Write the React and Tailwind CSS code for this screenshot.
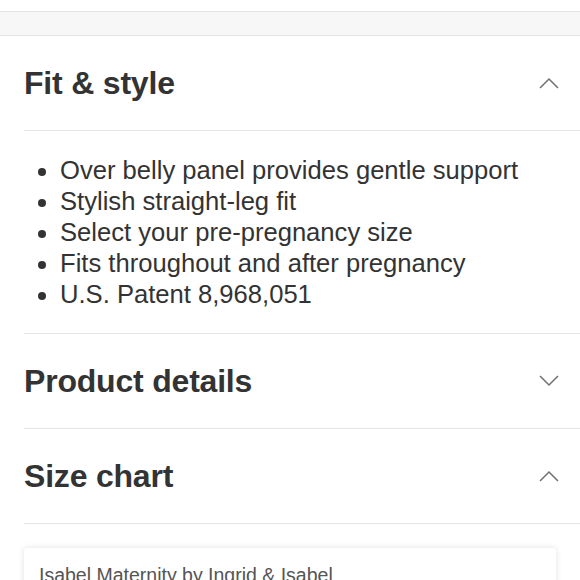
import { useState } from 'react';

const fitItems = [
  'Over belly panel provides gentle support',
  'Stylish straight-leg fit',
  'Select your pre-pregnancy size',
  'Fits throughout and after pregnancy',
  'U.S. Patent 8,968,051',
];

function Chevron({ open }) {
  return (
    <svg width="20" height="12" viewBox="0 0 20 12" fill="none" className="shrink-0">
      {open ? (
        <path d="M1 11 L10 2 L19 11" stroke="#707070" strokeWidth="1.5" />
      ) : (
        <path d="M1 1 L10 10 L19 1" stroke="#707070" strokeWidth="1.5" />
      )}
    </svg>
  );
}

function Section({ title, open, onToggle, children }) {
  return (
    <div className="ml-6 border-b border-[#e6e6e6]">
      <button
        onClick={onToggle}
        className="flex h-[94px] w-full items-center justify-between pr-[21px] text-left"
      >
        <h2 className="text-[32px] font-bold text-[#333333] tracking-[-0.2px]">{title}</h2>
        <Chevron open={open} />
      </button>
      {open && children}
    </div>
  );
}

export default function App() {
  const [open, setOpen] = useState({ fit: true, details: false, size: true });
  const toggle = (k) => setOpen((p) => ({ ...p, [k]: !p[k] }));

  return (
    <div className="min-h-[580px] bg-white font-['Liberation_Sans',Arial,sans-serif] overflow-hidden">
      <div className="h-[11px]" />
      <div className="h-[25px] border-y border-[#e3e3e3] bg-[#f7f7f7]" />

      <Section title="Fit & style" open={open.fit} onToggle={() => toggle('fit')}>
        <ul className="border-t border-[#e6e6e6] pt-6 pb-[23px] pl-[36px] list-disc text-[25.6px] leading-[31px] text-[#333333]">
          {fitItems.map((t) => (
            <li key={t}>{t}</li>
          ))}
        </ul>
      </Section>

      <Section title="Product details" open={open.details} onToggle={() => toggle('details')} />

      <Section title="Size chart" open={open.size} onToggle={() => toggle('size')} />
      {open.size && (
        <div className="px-6 pt-6">
          <div className="rounded-sm bg-white px-[15px] pt-[15px] pb-4 shadow-[0_0_6px_rgba(0,0,0,0.12)]">
            <p className="text-[19.5px] leading-6 text-[#555555]">Isabel Maternity by Ingrid &amp; Isabel</p>
          </div>
        </div>
      )}
    </div>
  );
}
